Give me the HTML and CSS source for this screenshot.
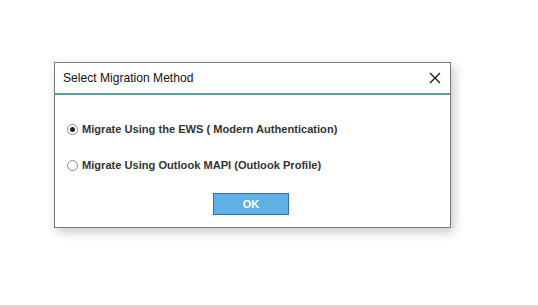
FILE: index.html
```html
<!DOCTYPE html>
<html lang="en">
<head>
<meta charset="UTF-8" />
<meta name="viewport" content="width=device-width, initial-scale=1.0"/>
<title>Select Migration Method</title>
<link rel="stylesheet" href="styles.css">
</head>
<body>
<div class="screen">
<div class="dialog">
<div class="titlebar">
<span class="title">Select Migration Method</span>
<svg class="close" width="12" height="12" viewBox="0 0 12 12"><path d="M1 1L11 11M11 1L1 11" stroke="#111" stroke-width="1.2" fill="none"/></svg>
</div>
<div class="content">
<label class="option"><span class="radio checked"></span>Migrate Using the EWS ( Modern Authentication)</label>
<label class="option"><span class="radio"></span>Migrate Using Outlook MAPI (Outlook Profile)</label>
<div class="actions">
<button class="ok">OK</button>
</div>
</div>
</div>
</div>
<div class="bottomline"></div>
</body>
</html>
```

FILE: styles.css
```css
body {
  margin: 0;
  background: #fff;
  font-family: 'Liberation Sans', Arial, sans-serif;
  color: #222;
}
.screen {
  height: 305px;
  padding: 62px 0 0 54px;
  box-sizing: border-box;
}
.dialog {
  width: 397px;
  height: 166px;
  box-sizing: border-box;
  border: 1px solid #7a7a7a;
  background: #fff;
  box-shadow: 3px 4px 10px rgba(0, 0, 0, 0.22);
  display: flex;
  flex-direction: column;
}
.titlebar {
  height: 30px;
  border-bottom: 2px solid #5f9aa2;
  display: flex;
  align-items: center;
  justify-content: space-between;
  padding: 0 9px 0 8px;
}
.title {
  font-size: 12.1px;
  color: #111;
}
.content {
  padding: 26px 0 0 12px;
}
.option {
  display: flex;
  align-items: center;
  font-weight: bold;
  font-size: 11.1px;
  color: #333;
  height: 16px;
  margin-bottom: 20px;
}
.radio {
  width: 9px;
  height: 9px;
  border: 1px solid #8a8a8a;
  border-radius: 50%;
  margin-right: 4px;
  position: relative;
  background: #fff;
}
.radio.checked::after {
  content: '';
  position: absolute;
  left: 2px;
  top: 2px;
  width: 5px;
  height: 5px;
  border-radius: 50%;
  background: #222;
}
.actions {
  display: flex;
  justify-content: center;
  margin-top: 0;
}
.ok {
  width: 76px;
  height: 22px;
  background: #5fb0e4;
  border: 1px solid #2b6fb0;
  color: #fff;
  font-family: 'Liberation Sans', Arial, sans-serif;
  font-weight: bold;
  font-size: 11px;
  margin-left: -15px;
}
.bottomline {
  height: 2px;
  background: #dcdcdc;
}
```
